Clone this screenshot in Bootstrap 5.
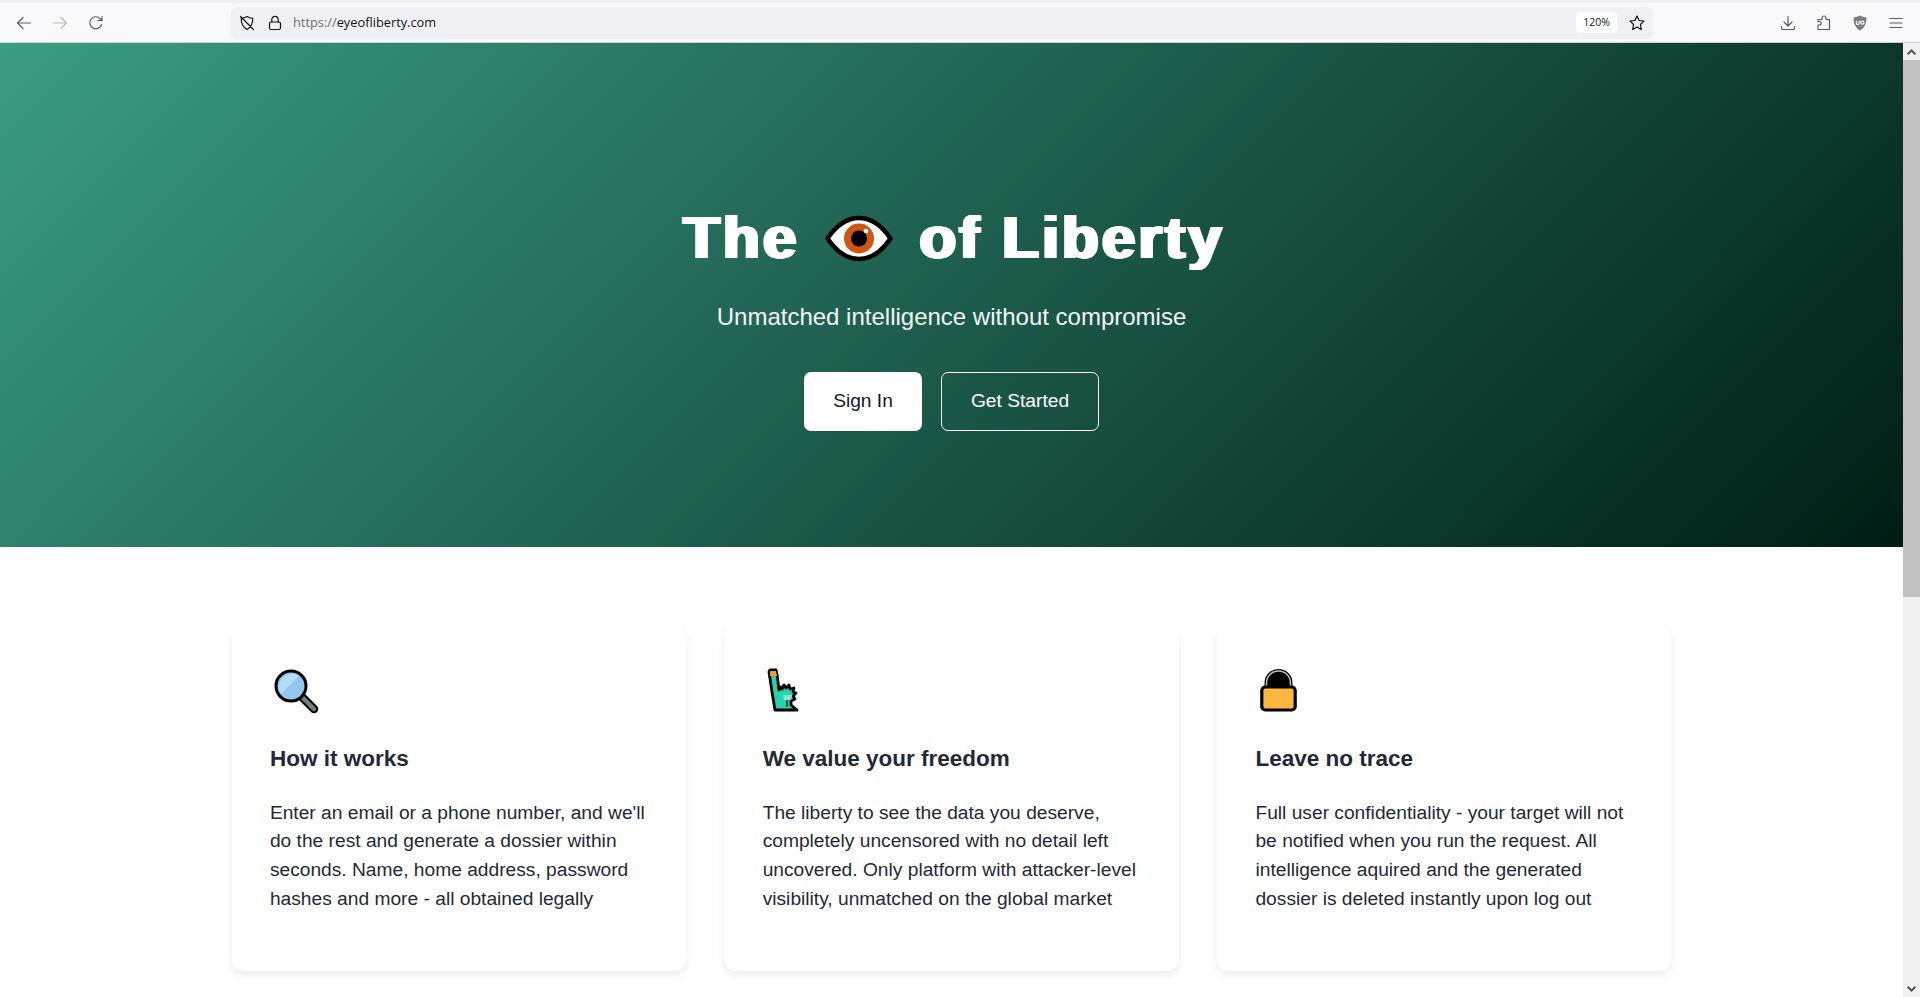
<!DOCTYPE html>
<html lang="en">
<head>
    <meta charset="UTF-8">
    <meta name="viewport" content="width=device-width, initial-scale=1.0">
    <title>The Eye of Liberty</title>
    <link href="https://cdn.jsdelivr.net/npm/bootstrap@5.3.3/dist/css/bootstrap.min.css" rel="stylesheet">
    <style>
        html, body { height: 100%; overflow: hidden; }
        body { font-family: "Liberation Sans", Arial, sans-serif; font-size: 19.2px; color: #1f2937; background: #fff; }

        /* browser chrome */
        .browser-bar { height: 43px; background: #f9f9fb; border-top: 3px solid #f0f0f4; border-bottom: 1px solid #cfcfd8; padding-left: 15px; color: #5b5b66; }
        .bar-btn { width: 18px; height: 18px; flex: none; fill: none; stroke: currentColor; stroke-width: 1.2; stroke-linecap: round; stroke-linejoin: round; }
        .bar-btn.off { color: #b9b9bf; }
        .back-tools { gap: 18px; }
        .url-box { height: 32px; margin-left: 126px; width: 1422px; flex: none; background: #f0f0f4; border-radius: 6px; padding-left: 7px; padding-right: 7px; font-family: "Open Sans", "Noto Sans", sans-serif; font-size: 12.8px; color: #15141a; }
        .url-lock { margin-left: 10px; }
        .url-text { margin-left: 9px; }
        .url-scheme { color: #6d6d78; }
        .zoom-tag { width: 41px; height: 21px; background: #fff; border-radius: 4px; font-size: 10.5px; color: #15141a; }
        .url-star { margin-left: 11px; }
        .right-tools { margin-left: 126px; gap: 18px; }

        /* page + scrollbar */
        .page-wrap { height: 954px; }
        .page-main { width: 1903px; flex: none; overflow: hidden; }
        .fake-scroll { width: 17px; flex: none; background: #f1f1f1; }
        .scroll-end { height: 17px; color: #505050; }
        .scroll-end svg { width: 9px; height: 6px; fill: currentColor; }
        .scroll-thumb { height: 537px; background: #c1c1c1; }

        /* hero */
        .hero-band { height: 504px; padding-top: 159px; color: #fff; background: linear-gradient(135deg, #3b9c82 0%, #1c5a4a 52%, #001d14 100%); }
        .hero-title { font-size: 60px; font-weight: 700; line-height: 72px; letter-spacing: 3.2px; margin-bottom: 25px; padding-left: 5px; gap: 26px; text-shadow: 1px 0 #fff, -1px 0 #fff, 2px 0 #fff, -2px 0 #fff; }
        .hero-eye { width: 68px; height: 47px; flex: none; }
        .hero-sub { font-size: 24px; line-height: 1.5; margin-bottom: 37px; opacity: .95; }
        .hero-btn { height: 59px; font-size: 19.2px; border-radius: 7px; display: flex; align-items: center; justify-content: center; }
        .btn-signin { width: 118px; background: #fff; color: #111827; border: 0; }
        .btn-start { width: 158px; background: transparent; color: #fff; border: 1px solid #fff; }
        .hero-actions { gap: 19px; }

        /* features */
        .features-wrap { width: 1440px; margin: 78px auto 0; }
        .features-row { --bs-gutter-x: 38.4px; }
        .feature-card { height: 346px; padding: 38.4px; border: 0; border-radius: 12px; box-shadow: 0 4px 8px rgba(0, 0, 0, .08); }
        .feature-icon { height: 62px; margin-bottom: 19.2px; padding-top: 5px; padding-left: 3px; }
        .feature-icon.icon-lock { padding-left: 5px; }
        .feature-title { font-size: 22.5px; font-weight: 700; line-height: 1.2; margin-bottom: 27px; color: #1f2937; }
        .feature-text { font-size: 19.2px; line-height: 28.8px; margin-bottom: 0; color: #1f2937; }
    </style>
</head>
<body>
    <!-- browser toolbar -->
    <div class="browser-bar d-flex align-items-center">
        <div class="back-tools d-flex align-items-center">
            <svg class="bar-btn" viewBox="0 0 18 18"><path d="M15.500 9H2.500M8 3.500 2.500 9 8 14.500"/></svg>
            <svg class="bar-btn off" viewBox="0 0 18 18"><path d="M2.500 9h13M10 3.500 15.500 9 10 14.500"/></svg>
            <svg class="bar-btn" viewBox="0 0 18 18"><path d="M14.600 10.500A6 6 0 1 1 13.200 4.600L15 6.400M15 2.500v3.900h-3.900"/></svg>
        </div>
        <div class="url-box d-flex align-items-center">
            <svg class="bar-btn" viewBox="0 0 18 18"><path d="M9 2.500c2 1.200 3.600 1.700 5.800 1.800 0 5-1.600 9-5.800 11.200-4.200-2.200-5.800-6.200-5.800-11.200C5.400 4.200 7 3.700 9 2.500zM2.500 2.500l13 13"/></svg>
            <svg class="bar-btn url-lock" viewBox="0 0 18 18"><rect x="3.500" y="8" width="11" height="7.500" rx="1.500"/><path d="M5.800 8V5.500a3.200 3.200 0 0 1 6.400 0V8"/></svg>
            <span class="url-text"><span class="url-scheme">https://</span>eyeofliberty.com</span>
            <span class="zoom-tag ms-auto d-flex align-items-center justify-content-center">120%</span>
            <svg class="bar-btn url-star" viewBox="0 0 18 18"><path d="m9 2 2.100 4.500 4.900.6-3.600 3.400.9 4.900L9 13l-4.300 2.400.9-4.900L2 7.100l4.900-.6z"/></svg>
        </div>
        <div class="right-tools d-flex align-items-center">
            <svg class="bar-btn" viewBox="0 0 18 18"><path d="M9 2.500v9M5 8l4 4 4-4M2.500 12.500v1.500a1.500 1.500 0 0 0 1.500 1.500h10a1.500 1.500 0 0 0 1.500-1.500v-1.500"/></svg>
            <svg class="bar-btn" viewBox="0 0 18 18"><path d="M3 15.500V11h1.500a1.500 1.500 0 0 0 0-3.500H3V5.500h4V4a2 2 0 0 1 4 0v1.500h3.500v10z"/></svg>
            <svg class="bar-btn" viewBox="0 0 18 18"><path fill="#7a7a84" stroke="none" d="M9 1.500c2 1.200 4 1.700 6.500 1.800 0 6-1.800 10.700-6.500 13.200-4.700-2.500-6.500-7.200-6.500-13.200C5 3.200 7 2.700 9 1.500z"/><path stroke="#fff" stroke-width="1.200" d="M5.500 7v2.200a1.300 1.300 0 0 0 2.600 0V7M11.300 7a1.600 1.600 0 1 0 .01 0z"/></svg>
            <svg class="bar-btn" viewBox="0 0 18 18"><path d="M3 4.500h12M3 9h12M3 13.500h12"/></svg>
        </div>
    </div>

    <div class="page-wrap d-flex">
        <div class="page-main">
            <div class="hero-band text-center">
                <h1 class="hero-title d-flex justify-content-center align-items-center">
                    <span>The</span>
                    <svg class="hero-eye" viewBox="0 0 68 47">
                        <path d="M2.500 23.500C12 9.500 22 3 34 3s22 6.500 31.500 20.500C56 37.500 46 44 34 44S12 37.500 2.500 23.500z" fill="#fff" stroke="#000" stroke-width="4.500" stroke-linejoin="round"/>
                        <circle cx="34" cy="23.500" r="15" fill="#cf5510"/>
                        <circle cx="34" cy="23.500" r="8" fill="#000"/>
                        <circle cx="41" cy="16" r="2.300" fill="#fff"/>
                    </svg>
                    <span>of Liberty</span>
                </h1>
                <p class="hero-sub">Unmatched intelligence without compromise</p>
                <div class="hero-actions d-flex justify-content-center">
                    <a href="#" class="btn hero-btn btn-signin">Sign In</a>
                    <a href="#" class="btn hero-btn btn-start">Get Started</a>
                </div>
            </div>

            <div class="features-wrap">
                <div class="row features-row">
                    <div class="col-4">
                        <div class="card feature-card">
                            <div class="feature-icon">
                                <svg width="48" height="46" viewBox="0 0 48 46">
                                    <path d="M27 27 41 41" stroke="#000" stroke-width="8.500" stroke-linecap="round"/>
                                    <path d="M29 29 41 41" stroke="#6c8289" stroke-width="4.500" stroke-linecap="round"/>
                                    <circle cx="18" cy="18" r="15" fill="#92c7ee" stroke="#000" stroke-width="3"/>
                                    <path d="M8 26A13 13 0 0 1 26 8z" fill="#b2def2"/>
                                </svg>
                            </div>
                            <h3 class="feature-title">How it works</h3>
                            <p class="feature-text">Enter an email or a phone number, and we'll do the rest and generate a dossier within seconds. Name, home address, password hashes and more - all obtained legally</p>
                        </div>
                    </div>
                    <div class="col-4">
                        <div class="card feature-card">
                            <div class="feature-icon">
                                <svg width="36" height="44" viewBox="0 0 36 44">
                                    <path d="M3 4 4 2h6l1 4 2 16 2-3 1 2 2-4 2 3 3-3 1 4 4-1-1 4 3 1-3 3 2 3-4 2v4l6 5H9L6 24z" fill="#27d3ac" stroke="#000" stroke-width="2.800" stroke-linejoin="round"/>
                                    <path d="M4 3h6l1 5H4z" fill="#f09a2c"/>
                                    <path d="M17 27h9l-1 5h-7z" fill="#8ae8d0"/>
                                    <path d="M21 32v7" stroke="#0b5c4b" stroke-width="2"/>
                                </svg>
                            </div>
                            <h3 class="feature-title">We value your freedom</h3>
                            <p class="feature-text">The liberty to see the data you deserve, completely uncensored with no detail left uncovered. Only platform with attacker-level visibility, unmatched on the global market</p>
                        </div>
                    </div>
                    <div class="col-4">
                        <div class="card feature-card">
                            <div class="feature-icon icon-lock">
                                <svg width="37" height="44" viewBox="0 0 37 44">
                                    <path d="M6 22v-7a12.500 12.500 0 0 1 25 0v7z" fill="#000"/>
                                    <path d="M6.500 21v-6a12 12 0 0 1 24 0v6" fill="none" stroke="#000" stroke-width="4"/>
                                    <path d="M6.500 20v-5a12 12 0 0 1 24 0v5" fill="none" stroke="#b9c0c5" stroke-width="1.500"/>
                                    <rect x="1.800" y="19" width="33.400" height="23" rx="3.500" fill="#fcb73e" stroke="#000" stroke-width="3.200"/>
                                </svg>
                            </div>
                            <h3 class="feature-title">Leave no trace</h3>
                            <p class="feature-text">Full user confidentiality - your target will not be notified when you run the request. All intelligence aquired and the generated dossier is deleted instantly upon log out</p>
                        </div>
                    </div>
                </div>
            </div>
        </div>
        <div class="fake-scroll d-flex flex-column">
            <div class="scroll-end d-flex align-items-center justify-content-center"><svg viewBox="0 0 9 6"><path d="M4.500 0 9 4.500 7.700 6 4.500 2.800 1.300 6 0 4.500z"/></svg></div>
            <div class="scroll-thumb"></div>
            <div class="scroll-end d-flex align-items-center justify-content-center mt-auto"><svg viewBox="0 0 9 6"><path d="M4.500 6 0 1.500 1.300 0 4.500 3.200 7.700 0 9 1.500z"/></svg></div>
        </div>
    </div>

    <script src="https://cdn.jsdelivr.net/npm/bootstrap@5.3.3/dist/js/bootstrap.bundle.min.js"></script>
</body>
</html>
